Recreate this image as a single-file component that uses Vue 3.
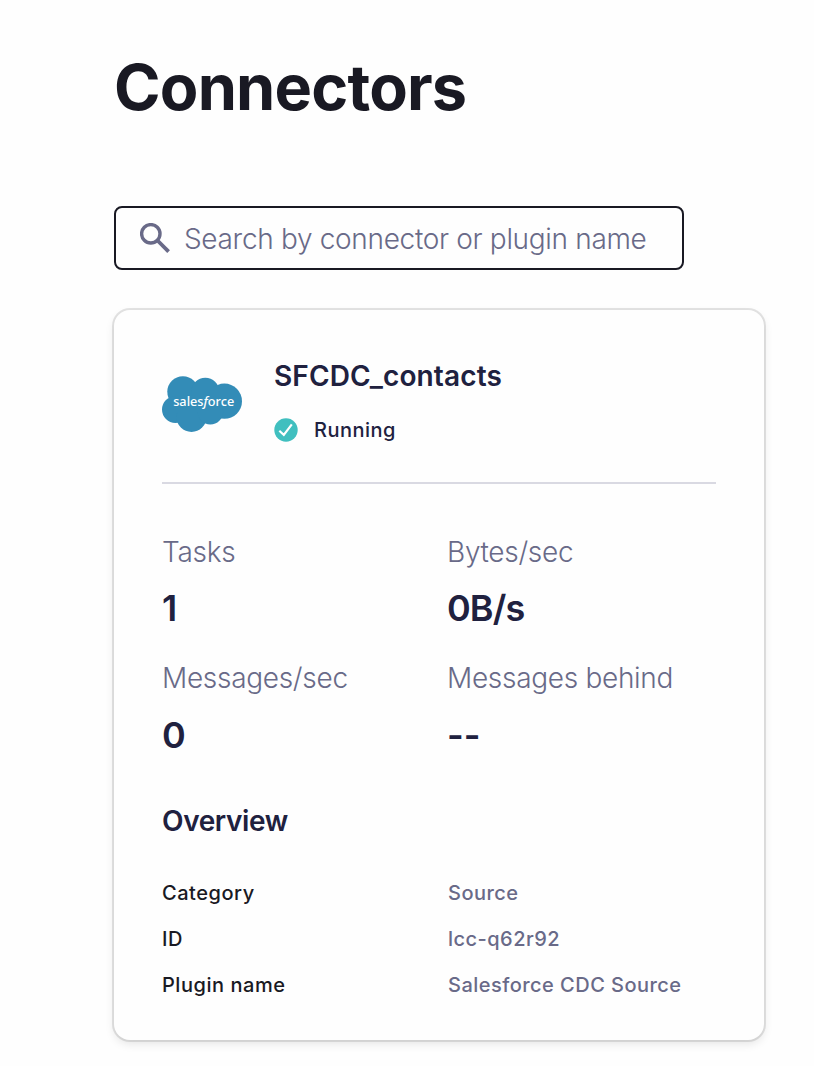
<script setup>
const metrics = [
  { label: 'Tasks', value: '1' },
  { label: 'Bytes/sec', value: '0B/s', tight: true },
  { label: 'Messages/sec', value: '0' },
  { label: 'Messages behind', value: '--' },
]
const details = [
  { label: 'Category', value: 'Source' },
  { label: 'ID', value: 'lcc-q62r92' },
  { label: 'Plugin name', value: 'Salesforce CDC Source' },
]
</script>

<template>
  <main class="page">
    <h1 class="heading">Connectors</h1>
    <div class="search">
      <svg class="search-icon" width="30" height="30" viewBox="0 0 30 30">
        <circle cx="10.8" cy="10.8" r="9.2" fill="none" stroke="#696a88" stroke-width="3.4" />
        <path d="M17.5 17.5 L28.6 28.6" fill="none" stroke="#696a88" stroke-width="3.8" />
      </svg>
      <span class="search-text">Search by connector or plugin name</span>
    </div>
    <section class="card">
      <header class="card-head">
        <svg class="logo" width="80" height="56" viewBox="0 0 80 56">
          <g fill="#338cb7">
            <circle cx="20.9" cy="15.8" r="15.6" />
            <circle cx="43.3" cy="15.6" r="13.9" />
            <circle cx="62.4" cy="25.2" r="17.6" />
            <circle cx="13.4" cy="33.6" r="13.4" />
            <circle cx="29.5" cy="41" r="15" />
            <circle cx="48.3" cy="35.8" r="12.8" />
            <path d="M14 20H60V36H14Z" />
          </g>
          <text class="logo-text" x="11.2" y="29.8" textLength="61" lengthAdjust="spacingAndGlyphs">sales<tspan font-style="italic">f</tspan>orce</text>
        </svg>
        <div>
          <h2 class="name">SFCDC_contacts</h2>
          <div class="status">
            <svg width="24" height="24" viewBox="0 0 24 24">
              <circle cx="12" cy="12" r="11.7" fill="#40bfbf" />
              <path d="M5.3 12.8 L9.8 16.8 L17.8 6.4" fill="none" stroke="#fff" stroke-width="2.2" />
            </svg>
            <span class="running">Running</span>
          </div>
        </div>
      </header>
      <div class="metrics">
        <div v-for="m in metrics" :key="m.label" class="metric">
          <div class="metric-label">{{ m.label }}</div>
          <div class="metric-value" :class="{ tight: m.tight }">{{ m.value }}</div>
        </div>
      </div>
      <h3 class="overview">Overview</h3>
      <dl class="details">
        <template v-for="d in details" :key="d.label">
          <dt>{{ d.label }}</dt>
          <dd>{{ d.value }}</dd>
        </template>
      </dl>
    </section>
  </main>
</template>

<style>
body {
  background: #fefefe;
}
</style>

<style scoped>
.page {
  box-sizing: border-box;
  height: 1066px;
  padding: 47px 50px 0 114px;
  font-family: Inter, "Liberation Sans", sans-serif;
  color: #20213f;
  overflow: hidden;
}
h1, h2, h3, dl, dd {
  margin: 0;
}
.heading {
  font-size: 63px;
  line-height: 80px;
  font-weight: 700;
  letter-spacing: -0.8px;
  color: #191923;
}
.search {
  box-sizing: border-box;
  width: 570px;
  height: 64px;
  margin-top: 79px;
  padding-left: 24px;
  border: 2px solid #191923;
  border-radius: 8px;
  display: flex;
  align-items: center;
  gap: 14px;
}
.search-text {
  font-size: 28px;
  line-height: 40px;
  font-weight: 300;
  letter-spacing: -0.32px;
  color: #696a88;
  padding-top: 2px;
  white-space: nowrap;
}
.card {
  box-sizing: border-box;
  width: 650px;
  height: 730px;
  margin-top: 40px;
  padding: 46px 48px 40px;
  border-radius: 16px;
  background: #fefefe;
  box-shadow: 0 0 0 2px rgba(0, 0, 0, 0.1), 0 4px 10px rgba(0, 0, 0, 0.1);
}
.card-head {
  display: flex;
  gap: 32px;
  height: 126px;
  border-bottom: 2px solid #d9d9e2;
}
.logo {
  margin-top: 20px;
}
.logo-text {
  font-family: "Noto Sans", sans-serif;
  font-size: 13px;
  font-weight: 500;
  fill: #fff;
}
.name {
  font-size: 28px;
  line-height: 40px;
  font-weight: 600;
  letter-spacing: 0.13px;
}
.status {
  display: flex;
  align-items: center;
  gap: 16px;
  margin-top: 19px;
}
.running {
  font-size: 20px;
  line-height: 30px;
  font-weight: 450;
  letter-spacing: 0.5px;
}
.metrics {
  display: grid;
  grid-template-columns: 269px 269px;
  column-gap: 16px;
  row-gap: 26px;
  margin-top: 48px;
}
.metric-label {
  font-size: 28px;
  line-height: 40px;
  font-weight: 300;
  letter-spacing: -0.3px;
  color: #696a88;
}
.metric-value {
  font-size: 36px;
  line-height: 48px;
  margin-top: 12px;
  font-weight: 600;
}
.metric:nth-child(n + 3) .metric-value {
  margin-top: 13px;
}
.tight {
  letter-spacing: -0.9px;
}
.overview {
  font-size: 28px;
  line-height: 40px;
  font-weight: 600;
  letter-spacing: -0.38px;
  margin-top: 42px;
}
.details {
  display: grid;
  grid-template-columns: 269px 268px;
  column-gap: 17px;
  row-gap: 16px;
  margin-top: 37px;
  font-size: 20px;
  line-height: 30px;
  font-weight: 450;
}
dt {
  color: #191923;
  letter-spacing: 0.54px;
}
dd {
  color: #696a88;
  letter-spacing: 0.47px;
}
</style>
